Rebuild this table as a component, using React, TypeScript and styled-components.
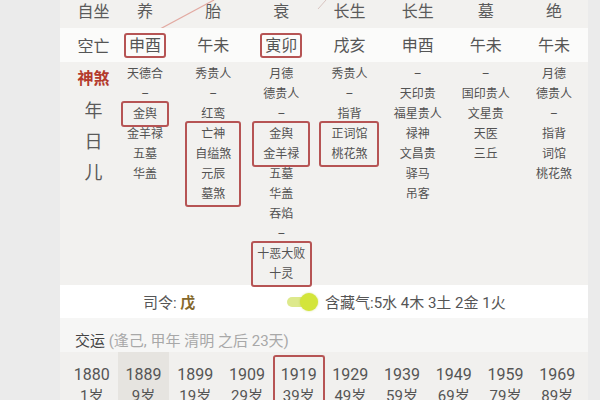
import React from 'react';
import styled, { createGlobalStyle } from 'styled-components';

const Global = createGlobalStyle`
  html, body { margin: 0; padding: 0; background: #ebebeb; }
  body {
    width: 600px; height: 400px; overflow: hidden;
    font-family: Roboto, "Noto Sans CJK SC", sans-serif;
  }
`;

const Page = styled.div`
  display: flex;
  width: 600px;
  height: 400px;
  background: #ebebeb;
  overflow: hidden;
`;

const Panel = styled.div`
  margin-left: 60px;
  width: 528px;
  height: 400px;
  background: #f2f1ef;
  display: flex;
  flex-direction: column;
  flex-shrink: 0;
`;

const Grid = styled.div<{ $h: number; $bg?: string }>`
  position: relative;
  display: grid;
  grid-template-columns: 35px repeat(7, 1fr);
  padding-left: 16px;
  height: ${(p) => p.$h}px;
  background: ${(p) => p.$bg || 'transparent'};
  flex-shrink: 0;
`;

const HeadCell = styled.div`
  display: flex;
  justify-content: center;
  align-items: flex-start;
  font-size: 16px;
  line-height: 24px;
  color: #5a5a5a;
  white-space: nowrap;
`;

const KongCell = styled.div`
  display: flex;
  justify-content: center;
  align-items: center;
  font-size: 16px;
  color: #555;
  white-space: nowrap;
`;

const KongBox = styled.span<{ $box?: boolean }>`
  display: inline-block;
  padding: 1px 3px;
  line-height: 19px;
  border: 2px solid ${(p) => (p.$box ? '#b65454' : 'transparent')};
  border-radius: 3px;
`;

const LabelCol = styled.div`
  display: flex;
  flex-direction: column;
  align-items: center;
  padding-top: 7px;
`;

const ShenshaTitle = styled.div`
  font-size: 16px;
  line-height: 20px;
  font-weight: 700;
  color: #b43a2c;
  white-space: nowrap;
  margin-bottom: 6px;
`;

const Pillar = styled.div`
  font-size: 18px;
  line-height: 31px;
  color: #5a5a5a;
`;

const SsCol = styled.div`
  display: flex;
  flex-direction: column;
  align-items: center;
  padding-top: 2px;
  font-size: 12px;
  line-height: 20px;
  color: #525252;
  white-space: nowrap;
`;

const SsBox = styled.div<{ $w: number }>`
  display: flex;
  flex-direction: column;
  align-items: center;
  width: ${(p) => p.$w}px;
  box-sizing: border-box;
  border: 2px solid #b65454;
  border-radius: 3px;
  padding: 1px 0;
  margin: -3px 0;
`;

const Overlay = styled.svg`
  position: absolute;
  left: 0;
  top: 0;
  pointer-events: none;
`;

const SilingRow = styled.div`
  display: grid;
  grid-template-columns: 225px 1fr;
  height: 33px;
  background: #fff;
  align-items: center;
  font-size: 15px;
  color: #555;
  flex-shrink: 0;
`;

const Siling = styled.div`
  padding-left: 83px;
  white-space: nowrap;
`;

const Wu = styled.b`
  color: #85682c;
  font-weight: 700;
`;

const HanCang = styled.div`
  display: flex;
  align-items: center;
  gap: 7px;
  white-space: nowrap;
`;

const Switch = styled.div`
  position: relative;
  width: 33px;
  height: 18px;
  display: flex;
  align-items: center;
`;

const Track = styled.div`
  width: 26px;
  height: 10px;
  border-radius: 5px;
  background: #dde98c;
  margin-left: 2px;
`;

const Knob = styled.div`
  position: absolute;
  right: 0;
  top: 0;
  width: 18px;
  height: 18px;
  border-radius: 50%;
  background: #d3e53a;
  box-shadow: 0 0 2px rgba(180, 200, 40, 0.6);
`;

const JiaoyunRow = styled.div`
  height: 34px;
  background: #f6f6f5;
  display: flex;
  align-items: flex-start;
  padding-left: 15px;
  padding-top: 12px;
  box-sizing: border-box;
  font-size: 15px;
  line-height: 22px;
  color: #444;
  white-space: nowrap;
  flex-shrink: 0;
`;

const Dim = styled.span`
  color: #a8a8a8;
`;

const YearsRow = styled.div`
  display: grid;
  grid-template-columns: repeat(10, 1fr);
  padding: 0 5px 0 6px;
  flex: 1;
  background: #f1f0ee;
`;

const YearCell = styled.div<{ $hi?: boolean; $box?: boolean }>`
  display: flex;
  flex-direction: column;
  align-items: center;
  box-sizing: border-box;
  padding-top: ${(p) => (p.$box ? 7 : 12)}px;
  margin-top: ${(p) => (p.$box ? 3 : 0)}px;
  background: ${(p) => (p.$hi ? '#e6e4e0' : 'transparent')};
  border: ${(p) => (p.$box ? '2px solid #b65454' : 'none')};
  border-bottom: none;
  border-radius: ${(p) => (p.$box ? '3px 3px 0 0' : '0')};
  color: #555;
`;

const Year = styled.div`
  font-size: 16px;
  line-height: 22px;
`;

const Age = styled.div`
  font-size: 15px;
  line-height: 20px;
`;

type Item = string | { box: string[]; w: number };

const heads = ['养', '胎', '衰', '长生', '长生', '墓', '绝'];
const kong: { t: string; box?: boolean }[] = [
  { t: '申酉', box: true },
  { t: '午未' },
  { t: '寅卯', box: true },
  { t: '戌亥' },
  { t: '申酉' },
  { t: '午未' },
  { t: '午未' },
];

const shensha: Item[][] = [
  ['天德合', '–', { box: ['金舆'], w: 48 }, '金羊禄', '五墓', '华盖'],
  ['秀贵人', '–', '红鸾', { box: ['亡神', '自缢煞', '元辰', '墓煞'], w: 56 }],
  ['月德', '德贵人', '–', { box: ['金舆', '金羊禄'], w: 58 }, '五墓', '华盖', '吞焰', '–', { box: ['十恶大败', '十灵'], w: 61 }],
  ['秀贵人', '–', '指背', { box: ['正词馆', '桃花煞'], w: 60 }],
  ['–', '天印贵', '福星贵人', '禄神', '文昌贵', '驿马', '吊客'],
  ['–', '国印贵人', '文星贵', '天医', '三丘'],
  ['月德', '德贵人', '–', '指背', '词馆', '桃花煞'],
];

const years = [1880, 1889, 1899, 1909, 1919, 1929, 1939, 1949, 1959, 1969];
const ages = [1, 9, 19, 29, 39, 49, 59, 69, 79, 89];

export default function App() {
  return (
    <Page>
      <Global />
      <Panel>
        <Grid $h={28}>
          <HeadCell>自坐</HeadCell>
          {heads.map((h, i) => (
            <HeadCell key={i}>{h}</HeadCell>
          ))}
          <Overlay width={528} height={28} viewBox="0 0 528 28">
            <line x1={100} y1={29} x2={154} y2={0} stroke="#e2aaa2" strokeWidth={1.2} />
            <line x1={258} y1={9} x2={266} y2={0} stroke="#d8c4c0" strokeWidth={1} />
          </Overlay>
        </Grid>
        <Grid $h={34} $bg="#fbfbfa">
          <KongCell>空亡</KongCell>
          {kong.map((k, i) => (
            <KongCell key={i}>
              <KongBox $box={k.box}>{k.t}</KongBox>
            </KongCell>
          ))}
        </Grid>
        <Grid $h={223}>
          <LabelCol>
            <ShenshaTitle>神煞</ShenshaTitle>
            <Pillar>年</Pillar>
            <Pillar>日</Pillar>
            <Pillar>儿</Pillar>
          </LabelCol>
          {shensha.map((col, i) => (
            <SsCol key={i}>
              {col.map((it, j) =>
                typeof it === 'string' ? (
                  <div key={j}>{it}</div>
                ) : (
                  <SsBox key={j} $w={it.w}>
                    {it.box.map((b, k) => (
                      <div key={k}>{b}</div>
                    ))}
                  </SsBox>
                )
              )}
            </SsCol>
          ))}
        </Grid>
        <SilingRow>
          <Siling>
            司令: <Wu>戊</Wu>
          </Siling>
          <HanCang>
            <Switch>
              <Track />
              <Knob />
            </Switch>
            <span>含藏气:5水 4木 3土 2金 1火</span>
          </HanCang>
        </SilingRow>
        <JiaoyunRow>
          交运&nbsp;<Dim>(逢己, 甲年 清明 之后 23天)</Dim>
        </JiaoyunRow>
        <YearsRow>
          {years.map((y, i) => (
            <YearCell key={y} $hi={i === 1} $box={i === 4}>
              <Year>{y}</Year>
              <Age>{ages[i]}岁</Age>
            </YearCell>
          ))}
        </YearsRow>
      </Panel>
    </Page>
  );
}
